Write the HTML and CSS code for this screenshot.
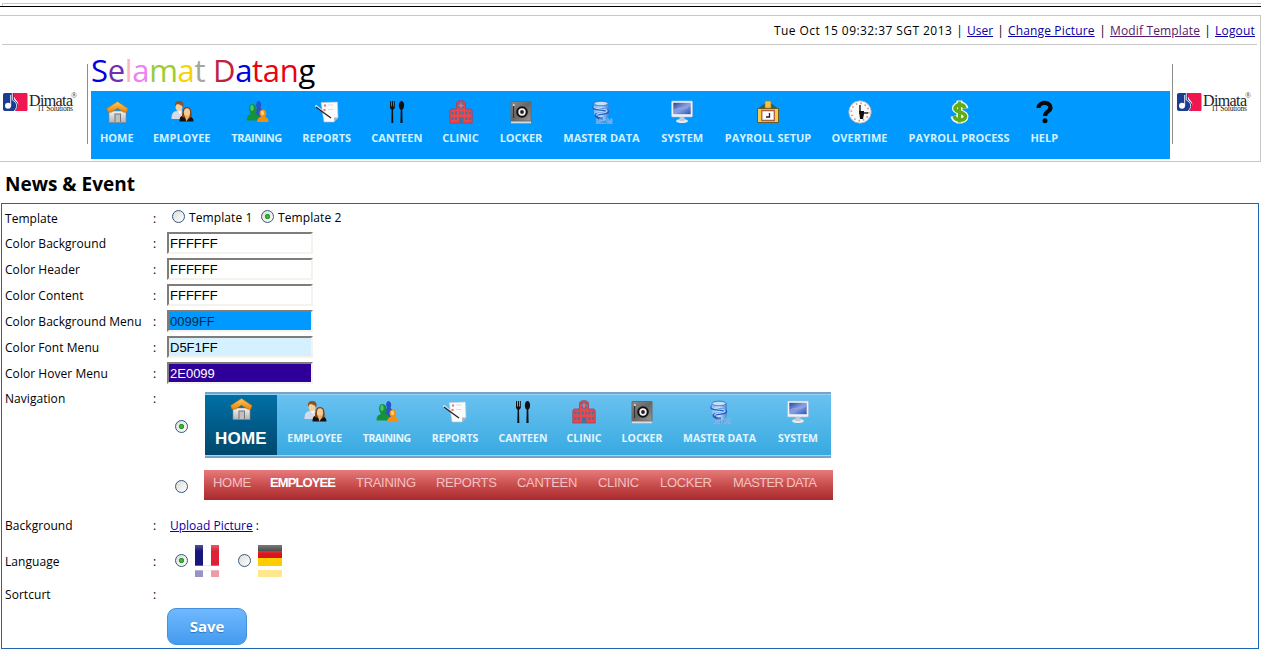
FILE: index.html
```html
<!DOCTYPE html>
<html lang="en">
<head>
<meta charset="utf-8">
<title>News &amp; Event</title>
<link rel="stylesheet" href="styles.css">
</head>
<body>
<svg class="defs" width="0" height="0" aria-hidden="true">
  <defs>
    <linearGradient id="roof" x1="0" y1="0" x2="0" y2="1"><stop offset="0" stop-color="#ffc95a"/><stop offset="1" stop-color="#e8860c"/></linearGradient>
    <linearGradient id="wall" x1="0" y1="0" x2="0" y2="1"><stop offset="0" stop-color="#f4f2ec"/><stop offset="1" stop-color="#b5b5b5"/></linearGradient>
    <linearGradient id="steel" x1="0" y1="0" x2="1" y2="1"><stop offset="0" stop-color="#8c8c8c"/><stop offset=".5" stop-color="#666"/><stop offset="1" stop-color="#999"/></linearGradient>
    <linearGradient id="screen" x1="0" y1="0" x2="1" y2="1"><stop offset="0" stop-color="#2746a0"/><stop offset=".5" stop-color="#8aa0e0"/><stop offset="1" stop-color="#2a55b8"/></linearGradient>
    <linearGradient id="coil" x1="0" y1="0" x2="1" y2="0"><stop offset="0" stop-color="#8fc4f4"/><stop offset=".5" stop-color="#d5eaff"/><stop offset="1" stop-color="#3a78d0"/></linearGradient>
    <symbol id="i-home" viewBox="0 0 24 24">
      <path d="M4 11h17v11.500H4z" fill="url(#wall)" stroke="#888" stroke-width=".6"/>
      <path d="M9.500 13.500h6.500v8.500h-6.500z" fill="#777"/><path d="M10.500 14.500h4.500v7.500h-4.500z" fill="#c0c0c0"/>
      <path d="M12.500 1.500 23 8.500l-1 3.500-3 .3-6.500-4L6 12.300 2.700 12l-1-3.500z" fill="url(#roof)" stroke="#b86a10" stroke-width=".6"/>
    </symbol>
    <symbol id="i-employee" viewBox="0 0 24 24">
      <path d="M1.500 19c0-6 2-7.500 5-8l3 2 4-2 2 8z" fill="#d6d9e6"/><path d="m7 11 3 3 2-3-1-2H8z" fill="#fff"/>
      <ellipse cx="9" cy="6.500" rx="3.600" ry="4.800" fill="#f5cfa0"/><path d="M5 7c-1-6 3-6 5-6 3 0 4.500 3 3 7C12.500 4.500 8.500 4.500 7 4z" fill="#8a5425"/>
      <path d="M9.500 21.500c0-4 1-6 5-6 5 0 9 1 9 6z" fill="#151010"/>
      <path d="M12 17c0-7 1.500-10 5-10 4 0 5 4 4.500 10l-3 2z" fill="#7b4314"/><ellipse cx="17" cy="12.500" rx="3.100" ry="4.300" fill="#f6ca92"/><path d="m14.500 15.500 2 6 3.500-6z" fill="#e9b070"/>
    </symbol>
    <symbol id="i-training" viewBox="0 0 24 24">
      <path d="M10 17c0-5 0-8 2-9-2-4 0-7 1.500-7s4 3 2 7c2 1 3 4 3 9z" fill="#2453cf"/>
      <path d="M1.500 20.500c0-4 1.500-6 4.500-6.500C3 10 3.500 4 7.500 4s5.500 6 3 10c3 .5 4.500 2.500 4.500 6.500z" fill="#15933b"/><ellipse cx="7" cy="8" rx="1.600" ry="3" fill="#4dc66a"/>
      <path d="M12 22c0-3 1.500-4.500 4-5-3-4-1-7.500 2-7.500s4.500 4 2 7.500c2.500.5 3.500 2 3.500 5z" fill="#f28f17"/><ellipse cx="17.500" cy="13" rx="1.600" ry="2.200" fill="#ffd274"/>
    </symbol>
    <symbol id="i-reports" viewBox="0 0 24 24">
      <path d="m6 2.500 16.500-.5.500 15.500-4 4.500H9z" fill="#fbfbfb" stroke="#b7c2d0" stroke-width=".6"/><path d="m19 22 .3-4.500h3.700z" fill="#aab"/>
      <path d="M9 4.500h2v2H9zM8.500 9h2v2h-2z" fill="#e86d7a"/><path d="M12.500 5h6M13 9.500h5" stroke="#ddd"/>
      <path d="m.5 5.500 8 6.500" stroke="#dfe5ee" stroke-width="2"/><path d="m1 7 6 4.500 9 6.500" stroke="#222" stroke-width="1.300" fill="none"/>
    </symbol>
    <symbol id="i-canteen" viewBox="0 0 24 24">
      <path d="M5 1v7l1.600 2L6.300 23h2L8 10l1.800-2V1H8.900v5.500h-.9V1H6.900v5.500H6V1z" fill="#111"/>
      <path d="M16.500 1c-2.800 0-3.800 6.500-.8 8.800L15.400 23h2.200l-.3-13.200C20.300 7.500 19.300 1 16.500 1z" fill="#111"/>
    </symbol>
    <symbol id="i-clinic" viewBox="0 0 24 24">
      <path d="M7.500 9V2.500L10 .8h4l2.500 1.700V9H22l1.200 2v12H.8V11L2 9z" fill="#e8484e" stroke="#a93c55" stroke-width=".8"/>
      <circle cx="12" cy="5.500" r="3.200" fill="#43749f"/><path d="M12 3v5M9.500 5.500h5" stroke="#ff6a6a" stroke-width="1.500"/>
      <path d="M2.500 11.500h2v3h-2zM6 11.500h2v3H6zm4 0h1.500v3H10zm3 0h1.500v3H13zm3.500 0h2v3h-2zm3.500 0h1.800v3H20zM2.500 17h2v3h-2zM6 17h2v3H6zm10.500 0h2v3h-2zm3.500 0h1.800v3H20zM10 17h4.500v6H10z" fill="#43749f"/>
    </symbol>
    <symbol id="i-locker" viewBox="0 0 24 24">
      <path d="M2 1.500h20v19.500H2z" fill="url(#steel)" stroke="#74685e"/><path d="M2 21.500h20v1.800H2z" fill="#d4dbe2"/>
      <path d="M4.500 6v12" stroke="#333" stroke-width="1.200"/><circle cx="4.800" cy="5" r="1" fill="#ddd"/>
      <circle cx="13" cy="12" r="5.800" fill="#111"/><circle cx="13" cy="12" r="3.700" fill="#f2f2f2"/><circle cx="13" cy="12" r="1.900" fill="#222"/>
    </symbol>
    <symbol id="i-master" viewBox="0 0 24 24">
      <path d="M4 3v9c0 4 3 8 7 9h5c2-2 3-5 3-9V3z" fill="url(#coil)" opacity=".8"/>
      <ellipse cx="11" cy="3.500" rx="7" ry="2.300" fill="#c4e0fa" stroke="#2f62bb" stroke-width=".8"/>
      <path d="M4.500 6C-1 11 18 8 18 11.500S4 12.500 6 16c1 2 4 3 7 2.500" fill="none" stroke="#285cc0" stroke-width="2.600"/>
      <path d="M4.500 6.300C1 9.500 17.500 8 17 11S5 12.500 7 15.500" fill="none" stroke="#b9dcfa" stroke-width="1.300"/>
      <text x="5.500" y="23.500" class="mdm">MDM</text>
    </symbol>
    <symbol id="i-system" viewBox="0 0 24 24">
      <ellipse cx="12" cy="21" rx="6" ry="2" fill="#e4e9ef"/><path d="M9.500 17h5v4h-5z" fill="#c1cbd8"/>
      <rect x="1.500" y="1" width="21" height="16" rx="1" fill="#eef2f7" stroke="#aeb9c9" stroke-width=".6"/><path d="M3.300 2.800h17.400v11.400H3.300z" fill="url(#screen)"/><path d="M4 11c5-6 10 1 16-6" fill="none" stroke="#8ea3e6" stroke-width="1.300"/>
    </symbol>
    <symbol id="i-setup" viewBox="0 0 24 24">
      <path d="M1.500 9 8 4h8l6.500 5v4h-21z" fill="#275f63"/>
      <path d="M1.500 8.500h21v14h-21z" fill="#f1cc50" stroke="#68551c" stroke-width=".9"/><path d="M9 1h6v7H9z" fill="#f6c344" stroke="#a57817" stroke-width=".7"/>
      <path d="M5.800 10.500h12.500v10H5.800z" fill="#fff" stroke="#ae603b" stroke-width="1.300"/><path d="M13.500 13v4h-3.500" fill="none" stroke="#222" stroke-width="1.300"/>
    </symbol>
    <symbol id="i-overtime" viewBox="0 0 24 24">
      <circle cx="12" cy="12" r="11.200" fill="#fafafa" stroke="#a8afb6" stroke-width=".9"/>
      <circle cx="12" cy="12" r="8.700" fill="none" stroke="#c99580" stroke-width="1.700" stroke-dasharray="1.500 3.055"/>
      <path d="M12 5v8h8" fill="none" stroke="#222" stroke-width="1.500"/><path d="M11 11h5v3l-1 5h-3z" fill="#111"/>
    </symbol>
    <symbol id="i-process" viewBox="0 0 24 24">
      <g fill="none"><path d="M12.500 .5v23M18.500 8.500c-.8-5.500-10.500-5-10.500 0 0 4 10.500 3 10.500 8 0 5-10.500 5.500-12-.5" stroke="#f5fae0" stroke-width="6"/>
      <path d="M12.500 1.500v21" stroke="#63a91c" stroke-width="3"/><path d="M17.800 8.500c-.8-5-9.800-4.500-9.800 0 0 4 10.500 3 10.500 8 0 4.500-10 5-11.300-.5" stroke="#63a91c" stroke-width="3.700"/></g>
    </symbol>
    <symbol id="i-help" viewBox="0 0 24 24">
      <path d="M6.500 8c.3-7 12.500-6.500 12 0-.2 3.500-5.500 3.500-5.500 8" fill="none" stroke="#0a0a0a" stroke-width="4.200"/><circle cx="13" cy="20.800" r="2.500" fill="#0a0a0a"/>
    </symbol>
    <symbol id="logo" viewBox="0 0 76 22">
      <path d="M1 3c0-1.300.7-2 2-2h11c-3 4-3 6 .5 9 3 3 2.500 6-1.500 9H3c-1.300 0-2-.7-2-2z" fill="#1c3c92"/>
      <path d="M11.500 1H24c1 0 1.500.6 1.500 1.500v15c0 1-.6 1.500-1.500 1.500H13c4.500-5 4-8 1-11-2-2-2.500-5-2.500-7z" fill="#f0164f"/>
      <path d="M10.300 1v7c5 2.500 6 7 1.700 11" fill="none" stroke="#dfe3f2" stroke-width="1"/><circle cx="6" cy="13.700" r="3" fill="#fff"/><path d="M8.700 3v11" stroke="#fff" stroke-width=".9"/>
      <text x="27" y="14" class="logo-name" textLength="44">Dimata</text>
      <text x="36" y="19.300" class="logo-sub" textLength="35">IT Solutions</text>
      <text x="69" y="6" class="logo-reg">®</text>
    </symbol>
  </defs>
</svg>

<div class="frame-top"></div>
<header class="header">
  <div class="userbar">
    <span class="date">Tue Oct 15 09:32:37 SGT 2013</span><i>|</i><a class="w-user" href="#">User</a><i>|</i><a class="w-change" href="#">Change Picture</a><i>|</i><a class="w-modif visited" href="#">Modif Template</a><i>|</i><a class="w-logout" href="#">Logout</a>
  </div>
  <div class="banner">
    <div class="brand"><svg><use href="#logo"/></svg></div>
    <div class="banner-main">
      <h1 class="welcome"><span class="c-blue">S</span><span class="c-purple">e</span><span class="c-pink">l</span><span class="c-violet">a</span><span class="c-lime">m</span><span class="c-gold">a</span><span class="c-gray">t</span> <span class="c-crimson">D</span><span class="c-blue">a</span><span class="c-red">tan</span><span>g</span></h1>
      <nav class="menu">
        <a class="item"><svg><use href="#i-home"/></svg>HOME</a>
        <a class="item"><svg><use href="#i-employee"/></svg>EMPLOYEE</a>
        <a class="item snug"><svg><use href="#i-training"/></svg>TRAINING</a>
        <a class="item"><svg><use href="#i-reports"/></svg>REPORTS</a>
        <a class="item"><svg><use href="#i-canteen"/></svg>CANTEEN</a>
        <a class="item"><svg><use href="#i-clinic"/></svg>CLINIC</a>
        <a class="item"><svg><use href="#i-locker"/></svg>LOCKER</a>
        <a class="item"><svg><use href="#i-master"/></svg>MASTER DATA</a>
        <a class="item"><svg><use href="#i-system"/></svg>SYSTEM</a>
        <a class="item"><svg><use href="#i-setup"/></svg>PAYROLL SETUP</a>
        <a class="item"><svg><use href="#i-overtime"/></svg>OVERTIME</a>
        <a class="item"><svg><use href="#i-process"/></svg>PAYROLL PROCESS</a>
        <a class="item"><svg><use href="#i-help"/></svg>HELP</a>
      </nav>
    </div>
    <div class="brand brand-right"><svg><use href="#logo"/></svg></div>
  </div>
</header>

<h2 class="title">News &amp; Event</h2>

<form class="panel">
  <div class="row row-first"><span>Template</span><span>:</span><div class="choices"><span class="radio"></span><label>Template 1</label><span class="radio on"></span><label>Template 2</label></div></div>
  <div class="row"><span>Color Background</span><span>:</span><input class="field" value="FFFFFF"></div>
  <div class="row"><span>Color Header</span><span>:</span><input class="field" value="FFFFFF"></div>
  <div class="row"><span>Color Content</span><span>:</span><input class="field" value="FFFFFF"></div>
  <div class="row"><span>Color Background Menu</span><span>:</span><input class="field f-menu" value="0099FF"></div>
  <div class="row"><span>Color Font Menu</span><span>:</span><input class="field f-font" value="D5F1FF"></div>
  <div class="row"><span>Color Hover Menu</span><span>:</span><input class="field f-hover" value="2E0099"></div>
  <div class="row row-nav"><span>Navigation</span><span>:</span>
    <div class="previews">
      <div class="option"><span class="radio on"></span>
        <div class="preview-blue">
          <a class="item active"><svg><use href="#i-home"/></svg>HOME</a>
          <a class="item"><svg><use href="#i-employee"/></svg>EMPLOYEE</a>
          <a class="item snug"><svg><use href="#i-training"/></svg>TRAINING</a>
          <a class="item"><svg><use href="#i-reports"/></svg>REPORTS</a>
          <a class="item"><svg><use href="#i-canteen"/></svg>CANTEEN</a>
          <a class="item"><svg><use href="#i-clinic"/></svg>CLINIC</a>
          <a class="item"><svg><use href="#i-locker"/></svg>LOCKER</a>
          <a class="item"><svg><use href="#i-master"/></svg>MASTER DATA</a>
          <a class="item"><svg><use href="#i-system"/></svg>SYSTEM</a>
        </div>
      </div>
      <div class="option"><span class="radio"></span>
        <div class="preview-red"><a>HOME</a><a class="active">EMPLOYEE</a><a>TRAINING</a><a>REPORTS</a><a>CANTEEN</a><a>CLINIC</a><a>LOCKER</a><a class="wide">MASTER DATA</a></div>
      </div>
    </div>
  </div>
  <div class="row row-bg"><span>Background</span><span>:</span><div class="upload"><a href="#">Upload Picture</a> :</div></div>
  <div class="row row-lang"><span>Language</span><span>:</span>
    <div class="flags">
      <span class="radio on"></span>
      <span class="flag"><span class="fr"></span><span class="fr mirror"></span></span>
      <span class="radio"></span>
      <span class="flag"><span class="de"></span><span class="de mirror"></span></span>
    </div>
  </div>
  <div class="row row-short"><span>Sortcurt</span><span>:</span></div>
  <div class="row row-save"><span></span><span></span><button type="button" class="save">Save</button></div>
</form>
</body>
</html>
```
FILE: styles.css
```css
* { box-sizing: border-box; }
body {
  margin: 0;
  height: 651px;
  overflow: hidden;
  background: #fff;
  color: #000;
  font: 12px/16px "Open Sans", "Noto Sans", sans-serif;
}
a { color: #0b00a8; }
.defs { position: absolute; }
.mdm { font: bold 7px "Liberation Sans", sans-serif; fill: #2f67bf; stroke: #c7e3fc; stroke-width: .3px; }
.logo-name { font: 16px "Liberation Serif", serif; fill: #222; }
.logo-sub { font: 7.5px "Liberation Serif", serif; fill: #222; }
.logo-reg { font: 8px "Liberation Serif", serif; fill: #444; }

.frame-top {
  height: 4px;
  margin: 3px 0 8px 2px;
  border-top: 1px solid #c8c8c8;
  border-bottom: 1px solid #000;
  border-left: 1px solid #c8c8c8;
  position: relative;
}
.frame-top::after { content: ""; position: absolute; left: -3px; bottom: -1px; width: 3px; height: 1px; background: #000; }

.header { height: 147px; border: solid #c8c8c8; border-width: 1px 1px 1px 0; }
.userbar {
  display: flex;
  justify-content: flex-end;
  align-items: center;
  height: 29px;
  margin: 0 3px 0 2px;
  padding: 1px 2px 0 0;
  border-bottom: 1px solid #c8c8c8;
}
.userbar i { width: 15px; text-align: center; font-style: normal; }
.userbar a, .userbar .date { white-space: nowrap; }
.date { width: 178px; letter-spacing: .43px; }
.w-user { width: 26px; }
.w-change { width: 87px; letter-spacing: .15px; }
.w-modif { width: 90px; letter-spacing: .15px; }
.w-logout { width: 40px; letter-spacing: .2px; }
.visited { color: #551a6b; }

.banner { display: flex; height: 116px; }
.brand { width: 88px; height: 80px; margin-top: 19px; padding: 28px 0 0 2px; border-right: 1px solid #8c8c8c; }
.brand svg { display: block; width: 76px; height: 22px; }
.banner-main { width: 1079px; margin: 0 2px 0 3px; }
.brand-right { border-right: 0; border-left: 1px solid #8c8c8c; padding-left: 3px; }
.welcome { margin: 0; height: 46px; padding-top: 5px; font-size: 31px; line-height: 40px; font-weight: 400; white-space: nowrap; letter-spacing: -.32px; }
.c-blue { color: #0000e0; }
.c-purple { color: #7030b0; }
.c-pink { color: #ffb6c1; }
.c-violet { color: #ee82ee; }
.c-lime { color: #9acd32; }
.c-gold { color: #f5d400; }
.c-gray { color: #a5a598; }
.c-crimson { color: #c21f45; }
.c-red { color: #ee0010; }

.menu {
  display: grid;
  grid-template-columns: 51.5px 78.5px 71px 69.500px 70.5px 57px 64px 97px 64.5px 107px 76px 123px 47.5px;
  height: 68px;
  background: #09f;
}
.item {
  display: flex;
  flex-direction: column;
  align-items: center;
  padding-top: 9px;
  color: #d5f1ff;
  font-size: 11px;
  line-height: 16px;
  font-weight: 700;
  white-space: nowrap;
}
.item svg { display: block; width: 24px; height: 24px; margin-bottom: 6px; }
.snug { letter-spacing: -.5px; }

.title { height: 24px; margin: 10px 0 7px 5px; font-size: 19px; line-height: 24px; font-weight: 700; }

.panel { width: 1258px; height: 446px; margin: 0 0 0 1px; border: 1px solid #1c66b4; }
.row { display: grid; grid-template-columns: 148px 14px auto; align-items: center; height: 26px; padding-left: 3px; }
.row > span { white-space: nowrap; padding-top: 1px; letter-spacing: .05px; }
.row-first > span { padding-top: 3px; }
.choices { display: flex; align-items: center; padding: 2px 0 0 5px; }
.choices .radio { margin: -3px 4px 0 0; }
.choices label { width: 72px; letter-spacing: .1px; }
.radio {
  flex: none;
  width: 13px;
  height: 13px;
  border: 1px solid #33597f;
  border-radius: 50%;
  background: linear-gradient(135deg, #dcdcd7, #fff);
}
.radio.on { background: radial-gradient(circle, #4fc53c 0, #23992a 2.2px, transparent 3px), linear-gradient(135deg, #dcdcd7, #fff); }
.field {
  width: 146px;
  height: 22px;
  margin: 0;
  padding: 1px 1px 0;
  border: 2px solid;
  border-color: #807d78 #f5f3ed #f5f3ed #807d78;
  font: 13px "Liberation Sans", Arial, sans-serif;
  color: #000;
  background: #fff;
}
.f-menu { background: #09f; color: #032a48; }
.f-font { background: #d5f1ff; }
.f-hover { background: #2e0099; color: #fff; }

.row-nav { height: 124px; align-items: start; }
.row-nav > span { padding-top: 5px; }
.previews { padding: 6px 0 0 8px; }
.option { display: flex; align-items: center; }
.option + .option { margin-top: 12px; }
.option .radio { margin-top: 3px; margin-right: 17px; }
.option + .option .radio { margin-right: 16px; }
.preview-blue {
  display: grid;
  grid-template-columns: 72px 75.5px 68.500px 68px 68px 54px 62px 93px 64px;
  width: 626px;
  height: 66px;
  border: solid #77a3c8;
  border-width: 2px 0;
  background: linear-gradient(#93d2f3 0 1px, #69c1f0 1px, #38aae1 61px, #a8d6f2 61px);
}
.preview-blue .item { padding-top: 6px; color: #e2f6ff; font-size: 10.5px; }
.preview-blue .item svg { margin-bottom: 6px; }
.preview-blue .active { height: 60px; margin-top: 1px; padding-top: 2px; background: linear-gradient(#0070a6, #00486d); color: #fff; font-family: "Liberation Sans", Arial, sans-serif; font-size: 17px; letter-spacing: .2px; }
.preview-blue .active svg { margin-bottom: 10px; }
.preview-red {
  display: grid;
  grid-template-columns: 57px 86px 80px 81px 81px 62px 73px 100px;
  width: 629px;
  height: 30px;
  padding-left: 9px;
  background: linear-gradient(#e67b7b, #c94d4d 50%, #a92a2d);
  color: #f5c0c0;
  font: 13px/26px "Liberation Sans", Arial, sans-serif;
  letter-spacing: -.3px;
  white-space: nowrap;
}
.preview-red a { color: inherit; }
.preview-red .active { color: #fff; font-weight: 700; letter-spacing: -.9px; }
.preview-red .wide { letter-spacing: -.65px; }

.row-bg { height: 31px; }
.upload { padding-left: 3px; }
.row-lang { height: 39px; }
.row-lang > span { padding-top: 2px; }
.flags { display: flex; align-items: center; padding-left: 8px; }
.flag { display: flex; flex-direction: column; gap: 4px; width: 24px; height: 32px; margin: 0 19px 0 7px; overflow: hidden; }
.fr, .de { flex: none; height: 21px; }
.fr { background: linear-gradient(rgba(255,255,255,.25), transparent 30%), linear-gradient(rgba(200,200,200,.4), rgba(200,200,200,.4)) 0 100% / 100% 1px no-repeat, linear-gradient(90deg, #16167c 8px, #fff 8px 16px, #dd2138 16px); }
.de { background: linear-gradient(rgba(255,255,255,.35), transparent 45%), linear-gradient(#333 6px, #d8141c 6px 13px, #fc0 13px); }
.mirror { opacity: .45; transform: scaleY(-1); }
.row-short { height: 28px; }
.row-save { height: 37px; }
.save {
  width: 80px;
  height: 37px;
  padding: 0 0 1px;
  border: 1px solid #4490dc;
  border-radius: 9px;
  background: linear-gradient(#70b8ff, #449bef);
  color: #fff;
  font: 700 15px "Open Sans", "Noto Sans", sans-serif;
  text-shadow: 0 1px 1px #2c74ba;
}
```
